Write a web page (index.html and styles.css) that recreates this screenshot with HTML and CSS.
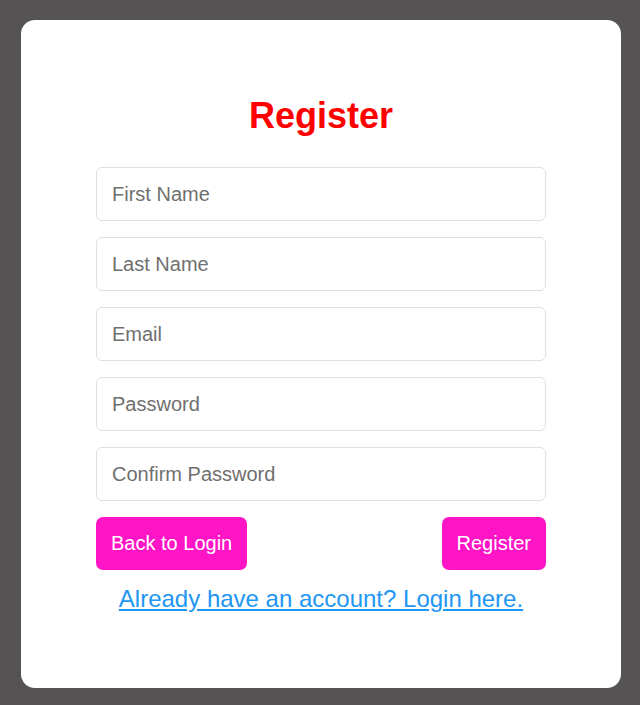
FILE: index.html
```html
<!DOCTYPE html>
<html lang="en">
<head>
<meta charset="utf-8">
<title>Register</title>
<link rel="stylesheet" href="styles.css">
</head>
<body>
<main class="card">
  <h1 class="title">Register</h1>
  <form class="form">
    <input class="field" type="text" placeholder="First Name">
    <input class="field" type="text" placeholder="Last Name">
    <input class="field" type="email" placeholder="Email">
    <input class="field" type="password" placeholder="Password">
    <input class="field" type="password" placeholder="Confirm Password">
    <div class="actions">
      <button class="btn" type="button">Back to Login</button>
      <button class="btn" type="submit">Register</button>
    </div>
  </form>
  <a class="login-link" href="#">Already have an account? Login here.</a>
</main>
</body>
</html>
```
FILE: styles.css
```css
html, body {
  margin: 0;
  height: 100%;
}
body {
  background: #555353;
  font-family: "Liberation Sans", Arial, sans-serif;
  padding: 20px 19px 17px 21px;
  box-sizing: border-box;
}
.card {
  background: #ffffff;
  width: 600px;
  height: 668px;
  box-sizing: border-box;
  border-radius: 14px;
  padding: 75px 75px 0;
  display: flex;
  flex-direction: column;
  align-items: stretch;
}
.title {
  margin: 0;
  color: #ff0000;
  font-size: 36px;
  font-weight: bold;
  text-align: center;
  line-height: 41px;
}
.form {
  margin-top: 31px;
  display: flex;
  flex-direction: column;
  gap: 16px;
}
.field {
  height: 54px;
  box-sizing: border-box;
  border: 1px solid #e0e0e0;
  border-radius: 6px;
  padding: 0 15px;
  font-family: "Liberation Sans", Arial, sans-serif;
  font-size: 20px;
  color: #333;
  outline: none;
}
.field::placeholder {
  color: #6f6f6f;
}
.actions {
  display: flex;
  justify-content: space-between;
}
.btn {
  height: 53px;
  padding: 0 15px;
  border: none;
  border-radius: 7px;
  background: #ff14c6;
  color: #ffffff;
  font-family: "Liberation Sans", Arial, sans-serif;
  font-size: 20px;
}
.login-link {
  margin-top: 15px;
  align-self: center;
  color: #2196f3;
  font-size: 24px;
  line-height: 28px;
  text-decoration: underline;
}
```
